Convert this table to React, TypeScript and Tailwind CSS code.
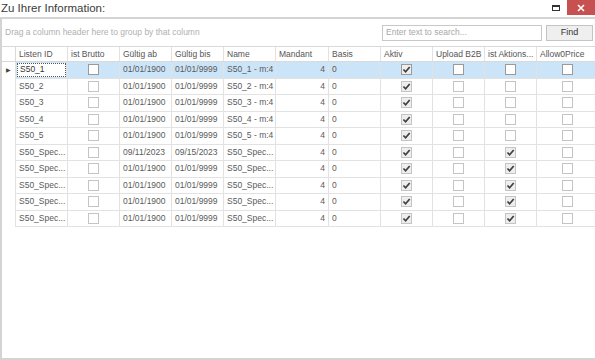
import React from "react";

type Row = {
  id: string;
  brutto: boolean;
  from: string;
  to: string;
  name: string;
  mandant: number;
  basis: string;
  aktiv: boolean;
  b2b: boolean;
  aktion: boolean;
  allow0: boolean;
};

const rows: Row[] = [
  { id: "S50_1", brutto: false, from: "01/01/1900", to: "01/01/9999", name: "S50_1 - m:4", mandant: 4, basis: "0", aktiv: true, b2b: false, aktion: false, allow0: false },
  { id: "S50_2", brutto: false, from: "01/01/1900", to: "01/01/9999", name: "S50_2 - m:4", mandant: 4, basis: "0", aktiv: true, b2b: false, aktion: false, allow0: false },
  { id: "S50_3", brutto: false, from: "01/01/1900", to: "01/01/9999", name: "S50_3 - m:4", mandant: 4, basis: "0", aktiv: true, b2b: false, aktion: false, allow0: false },
  { id: "S50_4", brutto: false, from: "01/01/1900", to: "01/01/9999", name: "S50_4 - m:4", mandant: 4, basis: "0", aktiv: true, b2b: false, aktion: false, allow0: false },
  { id: "S50_5", brutto: false, from: "01/01/1900", to: "01/01/9999", name: "S50_5 - m:4", mandant: 4, basis: "0", aktiv: true, b2b: false, aktion: false, allow0: false },
  { id: "S50_Spec...", brutto: false, from: "09/11/2023", to: "09/15/2023", name: "S50_Spec...", mandant: 4, basis: "0", aktiv: true, b2b: false, aktion: true, allow0: false },
  { id: "S50_Spec...", brutto: false, from: "01/01/1900", to: "01/01/9999", name: "S50_Spec...", mandant: 4, basis: "0", aktiv: true, b2b: false, aktion: true, allow0: false },
  { id: "S50_Spec...", brutto: false, from: "01/01/1900", to: "01/01/9999", name: "S50_Spec...", mandant: 4, basis: "0", aktiv: true, b2b: false, aktion: true, allow0: false },
  { id: "S50_Spec...", brutto: false, from: "01/01/1900", to: "01/01/9999", name: "S50_Spec...", mandant: 4, basis: "0", aktiv: true, b2b: false, aktion: true, allow0: false },
  { id: "S50_Spec...", brutto: false, from: "01/01/1900", to: "01/01/9999", name: "S50_Spec...", mandant: 4, basis: "0", aktiv: true, b2b: false, aktion: true, allow0: false },
];

const headers = [
  { label: "Listen ID", w: "w-[52px]" },
  { label: "ist Brutto", w: "w-[52px]" },
  { label: "Gültig ab", w: "w-[52px]" },
  { label: "Gültig bis", w: "w-[52px]" },
  { label: "Name", w: "w-[52px]" },
  { label: "Mandant", w: "w-[53px]" },
  { label: "Basis", w: "w-[52px]" },
  { label: "Aktiv", w: "w-[52px]" },
  { label: "Upload B2B", w: "w-[52px]" },
  { label: "ist Aktions...", w: "w-[52px]" },
  { label: "Allow0Price", w: "w-[60px]" },
];

function Check({ on, strong }: { on: boolean; strong?: boolean }) {
  return (
    <div
      className={
        "h-[11px] w-[11px] border flex items-center justify-center " +
        (strong ? "border-[#9a9a9a] " : "border-[#c4c4c4] ") +
        (on ? "bg-[#eeeeee]" : "bg-white")
      }
    >
      {on && (
        <svg width="9" height="9" viewBox="0 0 9 9">
          <path d="M1.4 4.5 L3.6 6.8 L7.7 2" fill="none" stroke="#3f3f3f" strokeWidth="1.7" />
        </svg>
      )}
    </div>
  );
}

function Cell({ w, children, right, center, last }: { w: string; children?: React.ReactNode; right?: boolean; center?: boolean; last?: boolean }) {
  return (
    <div
      className={
        w +
        " shrink-0 h-full flex items-center px-[3px] overflow-hidden whitespace-nowrap " +
        (last ? "" : "border-r border-[#e2e2e2] ") +
        (right ? "justify-end" : center ? "justify-center" : "justify-start")
      }
    >
      {children}
    </div>
  );
}

export default function App() {
  return (
    <div
      className="w-[595px] h-[360px] bg-white overflow-hidden flex flex-col"
      style={{ fontFamily: "'Liberation Sans', Arial, sans-serif" }}
    >
      {/* title bar */}
      <div className="h-[17px] flex items-start justify-between shrink-0">
        <span className="text-[11.5px] leading-[14px] text-[#3a3a3a] pl-[1px] pt-[1px]">Zu Ihrer Information:</span>
        <div className="flex items-start">
          <div className="mt-[5px] mr-[7px] w-[8px] h-[6px] border border-t-2 border-[#333]" />
          <div className="w-[28px] h-[15px] bg-[#c75050] flex items-center justify-center">
            <svg width="8" height="8" viewBox="0 0 8 8">
              <path d="M1 1 L7 7 M7 1 L1 7" stroke="#fff" strokeWidth="1.6" />
            </svg>
          </div>
        </div>
      </div>

      {/* grid frame */}
      <div className="flex-1 border-l-2 border-t-2 border-b-2 border-[#d4d4d4] flex flex-col min-h-0">
        {/* group panel + search */}
        <div className="h-[28px] shrink-0 border-b border-[#d9d9d9] flex items-center justify-between pl-[3px]">
          <span className="text-[8.5px] text-[#b0b0b0]">Drag a column header here to group by that column</span>
          <div className="flex items-center gap-[4px] pr-[2px]">
            <div className="w-[160px] h-[16px] border border-[#c8c8c8] bg-white flex items-center px-[3px] text-[8.5px] text-[#a8a8a8]">
              Enter text to search...
            </div>
            <div className="w-[47px] h-[16px] border border-[#c4c4c4] bg-[#efefef] flex items-center justify-center text-[9px] text-[#333]">
              Find
            </div>
          </div>
        </div>

        {/* header */}
        <div className="h-[15px] shrink-0 flex border-b border-[#d9d9d9] text-[8.5px] text-[#555]">
          <div className="w-[14px] shrink-0 border-r border-[#d9d9d9]" />
          {headers.map((h, i) => (
            <Cell key={h.label} w={h.w} last={i === headers.length - 1}>
              {h.label}
            </Cell>
          ))}
        </div>

        {/* rows */}
        <div className="flex flex-col text-[8.5px] text-[#5a5a5a]">
          {rows.map((r, i) => {
            const sel = i === 0;
            return (
              <div key={i} className={"h-[16.5px] flex " + (sel ? "bg-[#cce4f7]" : "")}>
                <div className="w-[14px] shrink-0 bg-white border-r border-[#e2e2e2] flex items-center justify-center">
                  {sel && <span className="text-[6px] text-[#444]">▶</span>}
                </div>
                <div className="flex flex-1 border-b border-[#e2e2e2]">
                  <div className="w-[52px] shrink-0 h-full border-r border-[#e2e2e2] p-[1px]">
                    <div
                      className={
                        "h-full flex items-center px-[2px] overflow-hidden whitespace-nowrap " +
                        (sel ? "bg-white border border-dotted border-[#555] text-[#333]" : "")
                      }
                    >
                      {r.id}
                    </div>
                  </div>
                  <Cell w="w-[52px]" center>
                    <Check on={r.brutto} strong={sel} />
                  </Cell>
                  <Cell w="w-[52px]">{r.from}</Cell>
                  <Cell w="w-[52px]">{r.to}</Cell>
                  <Cell w="w-[52px]">{r.name}</Cell>
                  <Cell w="w-[53px]" right>
                    {r.mandant}
                  </Cell>
                  <Cell w="w-[52px]">{r.basis}</Cell>
                  <Cell w="w-[52px]" center>
                    <Check on={r.aktiv} strong={sel} />
                  </Cell>
                  <Cell w="w-[52px]" center>
                    <Check on={r.b2b} strong={sel} />
                  </Cell>
                  <Cell w="w-[52px]" center>
                    <Check on={r.aktion} strong={sel} />
                  </Cell>
                  <Cell w="w-[60px]" center last>
                    <Check on={r.allow0} strong={sel} />
                  </Cell>
                </div>
              </div>
            );
          })}
        </div>
      </div>
    </div>
  );
}
